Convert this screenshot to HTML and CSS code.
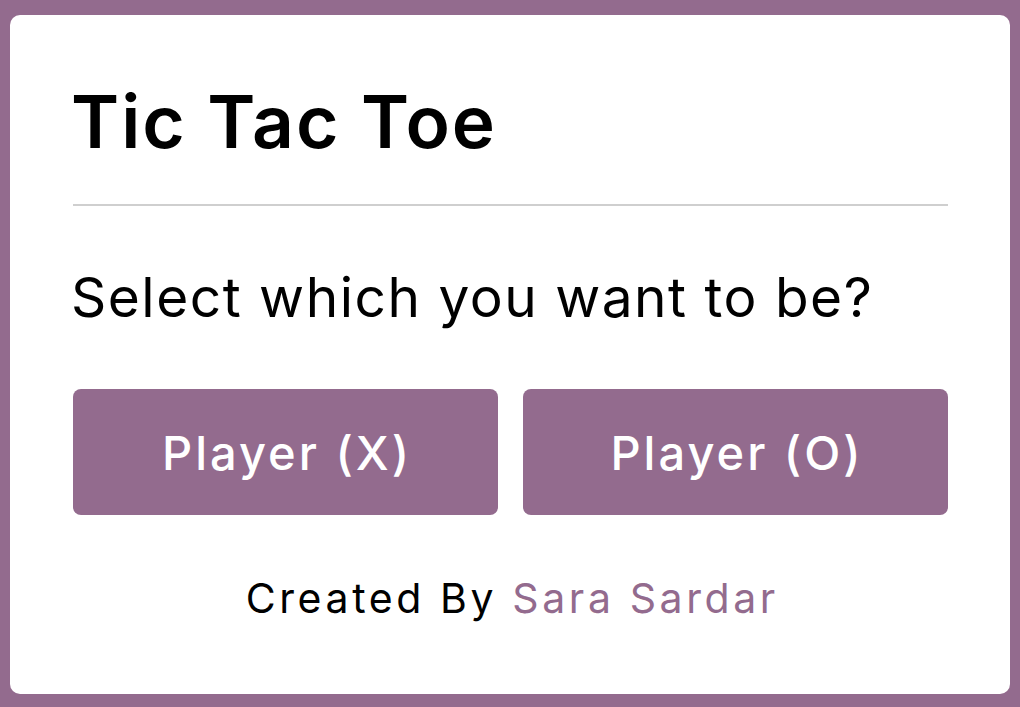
FILE: index.html
```html
<!DOCTYPE html>
<html lang="en">
<head>
<meta charset="utf-8">
<title>Tic Tac Toe</title>
<link rel="stylesheet" href="styles.css">
</head>
<body>
  <main class="card">
    <h1 class="title">Tic Tac Toe</h1>
    <hr class="divider">
    <p class="question">Select which you want to be?</p>
    <div class="choices">
      <button class="choice">Player (X)</button>
      <button class="choice">Player (O)</button>
    </div>
    <p class="credit">Created By <span class="author">Sara Sardar</span></p>
  </main>
</body>
</html>
```

FILE: styles.css
```css
* { box-sizing: border-box; }

html, body {
  margin: 0;
  height: 100%;
}

body {
  background: #936b8e;
  padding: 15px 10px 13px;
  font-family: Inter, "Open Sans", sans-serif;
  color: #000;
}

.card {
  background: #fff;
  border-radius: 10px;
  height: 100%;
  padding: 70px 62px 0 63px;
  display: flex;
  flex-direction: column;
}

.title {
  margin: 0 0 0 -2px;
  font-size: 73px;
  line-height: 1;
  font-weight: 600;
  letter-spacing: 2px;
}

.divider {
  margin: 46px 0 0;
  border: 0;
  height: 2px;
  background: #cfcfcf;
}

.question {
  margin: 63.5px 0 0 -2px;
  font-size: 55px;
  line-height: 1;
  font-weight: 400;
  letter-spacing: 1.5px;
}

.choices {
  margin-top: 64.5px;
  display: grid;
  grid-template-columns: 1fr 1fr;
  gap: 25px;
}

.choice {
  height: 126px;
  border: 0;
  border-radius: 8px;
  background: #936b8e;
  color: #fff;
  font-family: inherit;
  font-size: 47px;
  line-height: 1;
  font-weight: 500;
  letter-spacing: 3px;
  display: flex;
  align-items: center;
  justify-content: center;
  padding: 0 0 0 3px;
}

.credit {
  margin: 62.5px 0 0;
  text-align: center;
  font-size: 41px;
  line-height: 1;
  letter-spacing: 3.6px;
  padding-left: 3.6px;
}

.author {
  color: #936b8e;
}
```
